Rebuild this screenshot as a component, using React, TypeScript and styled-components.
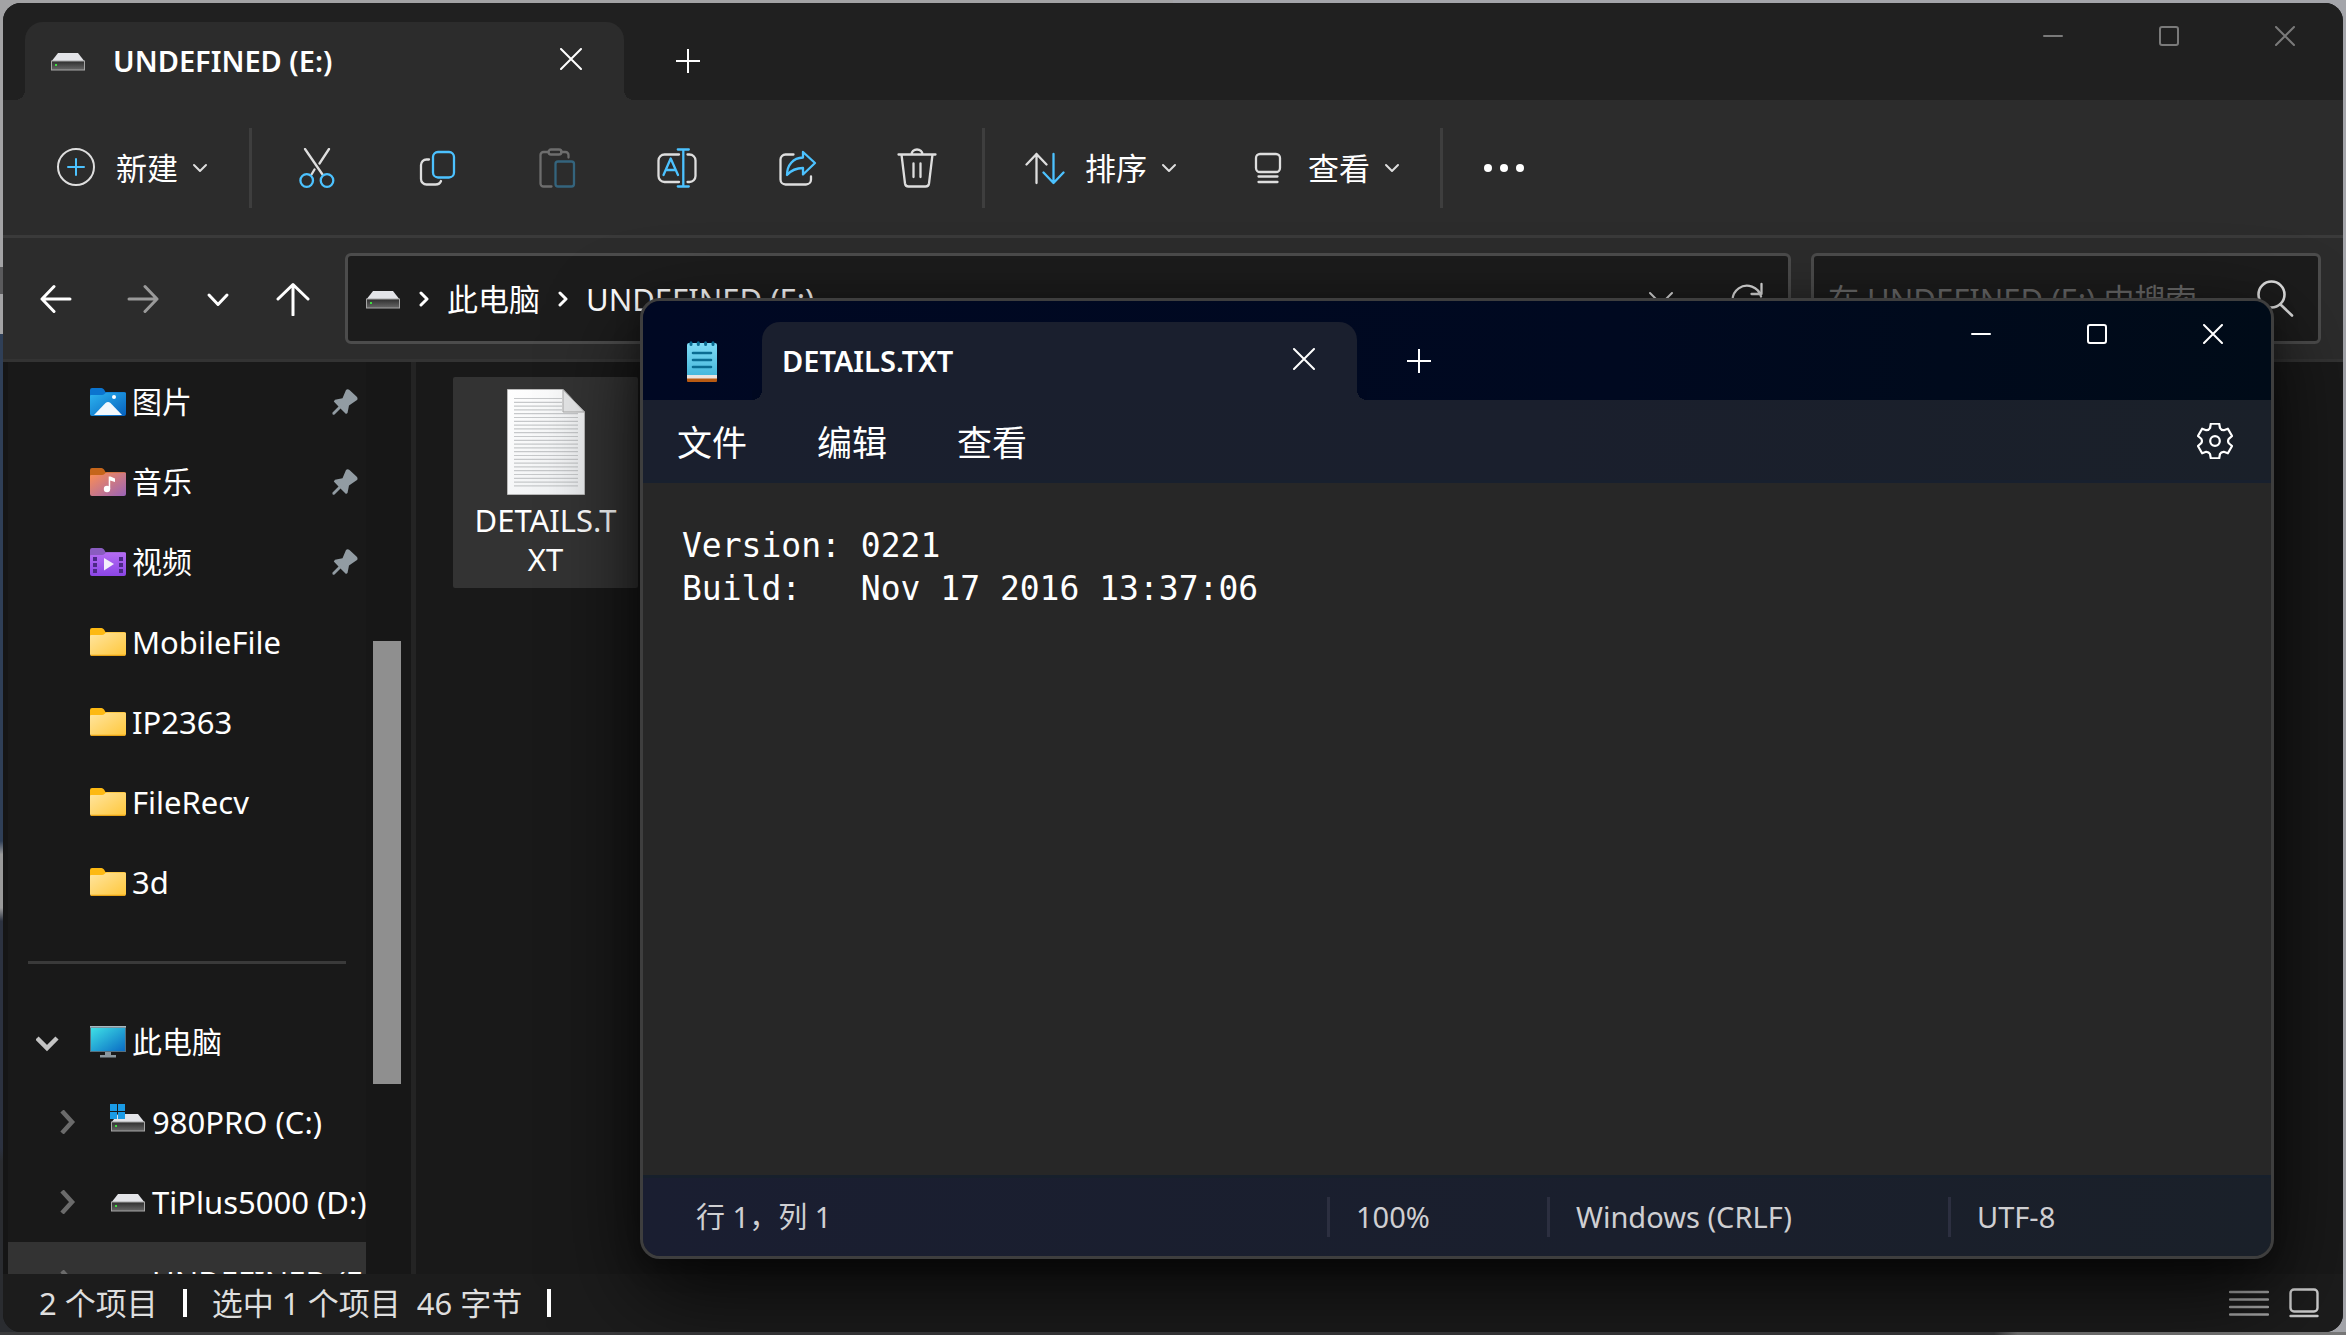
import React, { useState } from "react";
import styled, { createGlobalStyle } from "styled-components";

const ui = `"Noto Sans", "Noto Sans CJK SC", sans-serif`;
const blue = "#4cc2ff";

const GlobalStyle = createGlobalStyle`
  * { box-sizing: border-box; }
  body { margin: 0; background: #202020; }
  button, input, textarea { font: inherit; color: inherit; margin: 0; }
  svg { display: block; flex: none; }
`;

/* ---------- frame ---------- */

const Desktop = styled.div`
  position: relative;
  display: flex;
  height: 100vh;
  padding: 3px;
  overflow: hidden;
  font-family: ${ui};
  font-size: 31px;
  line-height: 40px;
  color: #fff;
  background:
    linear-gradient(90deg, #3a3a3c 0 85%, #787878 86%) bottom / 100% 3px no-repeat,
    linear-gradient(180deg, #a3a3a5 0 20%, #5a5a5c 20% 22%, #a3a3a5 22% 25%, #2f3f57 25% 63%, #9a9a9a 64% 68%, #2c3240 69% 86%, #2a2c30 87%) left / 50% 100% no-repeat,
    #a4a5aa;
`;

const Explorer = styled.section`
  display: flex;
  flex: 1;
  flex-direction: column;
  min-width: 0;
  border-radius: 18px;
  overflow: hidden;
  background: #191919;
`;

const PlainButton = styled.button`
  display: flex;
  align-items: center;
  justify-content: center;
  flex: none;
  padding: 0;
  border: 0;
  background: none;
  white-space: nowrap;
`;

const Tab = styled.div<{ $bg: string; $edge: string; $width: number }>`
  position: relative;
  display: flex;
  align-items: center;
  flex: none;
  width: ${(p) => p.$width}px;
  border-radius: 18px 18px 0 0;
  background: ${(p) => p.$bg};
  font-weight: 600;
  font-size: 29px;
  &::before,
  &::after {
    content: "";
    position: absolute;
    bottom: 0;
    width: 10px;
    height: 10px;
  }
  &::before {
    right: 100%;
    background: radial-gradient(circle at 0 0, ${(p) => p.$edge} 10px, ${(p) => p.$bg} 10px);
  }
  &::after {
    left: 100%;
    background: radial-gradient(circle at 100% 0, ${(p) => p.$edge} 10px, ${(p) => p.$bg} 10px);
  }
`;

const ExplorerTab = styled(Tab)`
  padding: 0 42px 0 25px;
  gap: 27px;
`;

const NoteTab = styled(Tab)`
  padding: 0 42px 0 20px;
`;

const TabName = styled.span`
  flex: 1;
  white-space: nowrap;
`;

const TabClose = styled(PlainButton)`
  height: 40px;
  padding-bottom: 4px;
`;

const TitleBar = styled.header`
  display: flex;
  flex: none;
  height: 97px;
  background: #202020;
`;

const NoteTitle = styled(TitleBar)`
  height: 99px;
  background: linear-gradient(90deg, #000823, #000920 60%, #000b18);
`;

const TabBar = styled.div`
  display: flex;
  flex: 1;
  padding: 19px 0 0 22px;
  gap: 44px;
`;

const NoteTabBar = styled(TabBar)`
  padding: 21px 0 0 44px;
  gap: 42px;
`;

const NewTab = styled(PlainButton)`
  width: 40px;
`;

const CaptionButtons = styled.div<{ $color: string }>`
  display: flex;
  height: 66px;
  color: ${(p) => p.$color};
`;

const CaptionButton = styled(PlainButton)`
  width: 116px;
  height: 66px;
`;

/* ---------- explorer toolbar ---------- */

const Toolbar = styled.div`
  display: flex;
  align-items: center;
  flex: none;
  height: 138px;
  padding: 0 12px;
  border-bottom: 3px solid #3a3a3a;
  background: #2c2c2c;
`;

const TextTool = styled(PlainButton)`
  gap: 20px;
`;

const ToolLabel = styled.span`
  display: flex;
  align-items: center;
  gap: 14px;
`;

const IconTool = styled(PlainButton)`
  width: 120px;
  height: 80px;
`;

const Rule = styled.span`
  flex: none;
  width: 3px;
  height: 80px;
  background: #3e3e3e;
`;

const Group = styled.div<{ $gap?: number; $pad: number }>`
  display: flex;
  gap: ${(p) => p.$gap ?? 0}px;
  padding: 0 ${(p) => p.$pad}px;
`;

const AddressRow = styled.div`
  display: flex;
  align-items: center;
  flex: none;
  gap: 20px;
  height: 124px;
  padding: 0 22px 0 32px;
  border-bottom: 3px solid #333;
  background: #2c2c2c;
`;

const NavButtons = styled.nav`
  display: flex;
  align-items: center;
  width: 290px;
`;

const NavButton = styled(PlainButton)<{ $width: number; $dim?: boolean }>`
  width: ${(p) => p.$width}px;
  height: 60px;
  color: ${(p) => (p.$dim ? "#9a9a9a" : "#fff")};
`;

const Field = styled.div`
  display: flex;
  align-items: center;
  min-width: 0;
  height: 91px;
  border: 3px solid #4c4c4c;
  border-radius: 6px;
  background: #1c1c1c;
`;

const Address = styled(Field)`
  flex: 1;
  gap: 18px;
  padding: 0 24px 0 17px;
`;

const Grow = styled.span`
  flex: 1;
`;

const EndButtons = styled.div`
  display: flex;
  gap: 56px;
`;

const Search = styled(Field)`
  flex: 0 0 510px;
  padding: 0 24px 0 14px;
`;

const SearchInput = styled.input`
  flex: 1;
  min-width: 0;
  padding: 0;
  border: 0;
  outline: 0;
  background: none;
  &::placeholder {
    color: #6a6a6a;
    opacity: 1;
  }
`;

/* ---------- explorer body ---------- */

const Body = styled.div`
  display: flex;
  flex: 1;
  min-height: 0;
`;

const Sidebar = styled.aside`
  display: flex;
  flex: none;
  width: 413px;
  border-left: 5px solid #151515;
  border-right: 5px solid #242424;
  overflow: hidden;
`;

const Tree = styled.ul`
  width: 358px;
  margin: 0;
  padding: 0;
  list-style: none;
`;

const TreeRow = styled.li<{ $deep?: boolean; $selected?: boolean }>`
  display: flex;
  align-items: center;
  height: 80px;
  overflow: hidden;
  padding-left: ${(p) => (p.$deep ? 48 : 28)}px;
  background: ${(p) => (p.$selected ? "#333" : "none")};
`;

const Twisty = styled(PlainButton)`
  width: 24px;
  height: 40px;
  margin-right: 30px;
`;

const TreeLink = styled.a<{ $cjk?: boolean }>`
  display: flex;
  align-items: center;
  flex: 1;
  gap: 6px;
  color: inherit;
  font-size: ${(p) => (p.$cjk ? 30 : 31)}px;
  text-decoration: none;
  white-space: nowrap;
`;

const PinSlot = styled.span`
  flex: none;
  width: 34px;
`;

const TreeDivider = styled.li`
  display: flex;
  align-items: center;
  height: 80px;
  padding: 0 20px;
  &::after {
    content: "";
    flex: 1;
    height: 3px;
    background: #3a3a3a;
  }
`;

const ScrollTrack = styled.div`
  display: flex;
  flex: 1;
  flex-direction: column;
  padding: 0 10px 0 7px;
  background: #171717;
`;

const ScrollPart = styled.div<{ $share: number; $thumb?: boolean }>`
  flex: ${(p) => p.$share};
  background: ${(p) => (p.$thumb ? "#8f8f8f" : "none")};
`;

const Files = styled.main`
  flex: 1;
  padding: 15px 37px;
`;

const FileTile = styled(PlainButton)`
  flex-direction: column;
  justify-content: flex-start;
  width: 185px;
  height: 211px;
  padding: 12px 18px 0;
  gap: 6px;
  border-radius: 2px;
  background: #333;
`;

const FileName = styled.span`
  line-height: 39px;
  white-space: normal;
  word-break: break-all;
`;

const StatusBar = styled.footer`
  display: flex;
  align-items: center;
  flex: none;
  height: 58px;
  padding: 0 24px 0 36px;
  background: #1c1c1c;
  color: #dedede;
`;

const StatusRule = styled.span`
  width: 4px;
  height: 28px;
  margin: 0 25px;
  background: #fff;
`;

const StatusText = styled.span`
  margin-right: 16px;
  white-space: nowrap;
`;

const ViewButtons = styled.div`
  display: flex;
  gap: 20px;
  margin-left: auto;
`;

/* ---------- notepad ---------- */

const Notepad = styled.section`
  position: absolute;
  top: 298px;
  right: 72px;
  bottom: 76px;
  left: 640px;
  display: flex;
  flex-direction: column;
  border: 3px solid #3e3e3e;
  border-radius: 20px;
  overflow: hidden;
  background: #272727;
  box-shadow: 0 32px 90px rgba(0, 0, 0, 0.75), 0 8px 24px rgba(0, 0, 0, 0.3);
`;

const AppIcon = styled.span`
  display: flex;
  align-items: center;
  width: 33px;
`;

const MenuBar = styled.div`
  display: flex;
  align-items: center;
  flex: none;
  height: 83px;
  padding: 2px 38px 0 34px;
  gap: 70px;
  border-bottom: 3px solid #18202e;
  background: linear-gradient(90deg, #1a1f2e, #1a1f2d 55%, #1a2029);
`;

const MenuItem = styled(PlainButton)`
  padding-top: 4px;
  font-size: 35px;
  line-height: 50px;
`;

const Editor = styled.textarea`
  flex: 1;
  min-height: 0;
  padding: 41px 39px;
  border: 0;
  outline: 0;
  resize: none;
  background: #272727;
  font-family: "DejaVu Sans Mono", monospace;
  font-size: 33px;
  line-height: 43px;
`;

const NoteStatus = styled.footer`
  display: grid;
  grid-template-columns: 1fr 220px 401px 323px;
  align-items: center;
  flex: none;
  height: 81px;
  padding-left: 53px;
  border-top: 3px solid #17202c;
  background: linear-gradient(90deg, #1a1e31, #1a1f2d 60%, #1a2029);
  color: #cfcfd2;
  font-size: 29px;
`;

const NoteCell = styled.span<{ $ruled?: boolean }>`
  height: 40px;
  padding-left: ${(p) => (p.$ruled ? 26 : 0)}px;
  border-left: ${(p) => (p.$ruled ? "3px solid #2c2f40" : "0")};
  white-space: nowrap;
`;

/* ---------- icons ---------- */

type StrokeProps = { w: number; h?: number; sw?: number; color?: string; children: React.ReactNode };

const Stroke = ({ w, h = w, sw = 2, color = "currentColor", children }: StrokeProps) => (
  <svg width={w} height={h} viewBox={`0 0 ${w} ${h}`} fill="none" stroke={color} strokeWidth={sw} strokeLinecap="round" strokeLinejoin="round" aria-hidden="true">
    {children}
  </svg>
);

const light = "#dedede";

const CloseGlyph = ({ size = 20 }: { size?: number }) => (
  <Stroke w={size}><path d={`M1 1L${size - 1} ${size - 1}M${size - 1} 1L1 ${size - 1}`} /></Stroke>
);
const PlusGlyph = () => <Stroke w={24}><path d="M12 0V24M0 12H24" /></Stroke>;
const MinGlyph = () => <Stroke w={20}><path d="M1 10H19" /></Stroke>;
const MaxGlyph = () => <Stroke w={20}><rect x="1" y="1" width="18" height="18" rx="2" /></Stroke>;
const ChevronSmall = () => <Stroke w={16} color={light}><path d="M2 5L8 11L14 5" /></Stroke>;

const NewIcon = () => (
  <Stroke w={40} color={light}>
    <circle cx="20" cy="19" r="18" /><path d="M20 11V27M12 19H28" stroke={blue} />
  </Stroke>
);
const CutIcon = () => (
  <Stroke w={40} sw={2.3} color={light}>
    <path d="M8 1L25.500 26.500M32 1L22.500 15.500M17.500 21.500L14.500 26.500" />
    <circle cx="9.700" cy="32.500" r="6.300" stroke={blue} /><circle cx="30" cy="32.500" r="6.300" stroke={blue} />
  </Stroke>
);
const CopyIcon = () => (
  <Stroke w={40} sw={2.3} color={light}>
    <path d="M12 11.500H9.500A5.500 5.500 0 0 0 4 17V31A5.500 5.500 0 0 0 9.500 36.500H18.500C21.500 36.500 23.200 35.300 24 33" />
    <rect x="16" y="4" width="21" height="25.500" rx="5" stroke={blue} />
  </Stroke>
);
const PasteIcon = () => (
  <Stroke w={40} sw={2.3} color="#6d6d6d">
    <path d="M11.500 4H6.500A3 3 0 0 0 3.500 7V35.500A3 3 0 0 0 6.500 38.500H14.500M24 4H28.500A3 3 0 0 1 31.500 7V9.500" />
    <rect x="11.500" y="1.500" width="13" height="5" rx="2.500" />
    <rect x="18.500" y="13.500" width="18.500" height="25" rx="2.500" stroke="#34647d" />
  </Stroke>
);
const RenameIcon = () => (
  <Stroke w={40} sw={2.3} color={light}>
    <path d="M22 6.500H7.500A6 6 0 0 0 1.500 12.500V28A6 6 0 0 0 7.500 34H22M30.500 6.500H32.500A6 6 0 0 1 38.500 12.500V28A6 6 0 0 1 32.500 34H30.500" />
    <path d="M26.300 1.500V38.500M20.800 1.500H31.800M20.800 38.500H31.800M6.500 27L13.700 10.500L21 27M8.800 22H18.800" stroke={blue} />
  </Stroke>
);
const ShareIcon = () => (
  <Stroke w={40} sw={2.3} color={light}>
    <path d="M16.500 6.500H8.500A5 5 0 0 0 3.500 11.500V31.500A5 5 0 0 0 8.500 36.500H29A5 5 0 0 0 34 31.500V28.500" />
    <path d="M26 4L38 15L26 26.500V20C19 20 14 22.500 10 27C10 17 16 10 26 9.500Z" stroke={blue} />
  </Stroke>
);
const TrashIcon = () => (
  <Stroke w={40} sw={2.3} color={light}>
    <path d="M1.500 6.500H38.500M14.500 6.500A5.500 5 0 0 1 25.500 6.500M4.500 6.500L8 35.500A3.500 3.500 0 0 0 11.500 38.500H28.500A3.500 3.500 0 0 0 32 35.500L35.500 6.500M16.500 15.500V29M23.500 15.500V29" />
  </Stroke>
);
const SortIcon = () => (
  <Stroke w={40} sw={2.3} color={light}>
    <path d="M11.500 35V6M1.500 16.500L11.500 6L21.500 16.500" />
    <path d="M28.500 6V35M18.500 24.500L28.500 35L38.500 24.500" stroke={blue} />
  </Stroke>
);
const ViewIcon = () => (
  <Stroke w={40} sw={2.3} color={light}>
    <rect x="8" y="6" width="24" height="18" rx="4" /><path d="M10.500 28.500H29.500M10.500 34H29.500" />
  </Stroke>
);
const DotsIcon = () => (
  <svg width="42" height="12" viewBox="0 0 42 12" fill="#fff" aria-hidden="true">
    <circle cx="5" cy="6" r="4" /><circle cx="21" cy="6" r="4" /><circle cx="37" cy="6" r="4" />
  </svg>
);

const BackIcon = () => <Stroke w={32} sw={3}><path d="M30 16H2M14 3.500L2 16L14 28.500" /></Stroke>;
const ForwardIcon = () => <Stroke w={32} sw={3}><path d="M2 16H30M18 3.500L30 16L18 28.500" /></Stroke>;
const RecentIcon = () => <Stroke w={24} sw={3}><path d="M3 8L12 17.500L21 8" /></Stroke>;
const UpIcon = () => <Stroke w={34} sw={3}><path d="M17 33V3M2 17L17 2.500L32 17" /></Stroke>;
const CrumbArrow = () => <Stroke w={10} h={16} sw={3}><path d="M2 2L8 8L2 14" /></Stroke>;
const DropIcon = () => <Stroke w={26} color={light}><path d="M2 7L13 18L24 7" /></Stroke>;
const RefreshIcon = () => (
  <Stroke w={34} sw={2.3} color={light}><path d="M31 14.500A14.500 14.500 0 1 0 31 22M31.500 2V12H21.500" /></Stroke>
);
const SearchIcon = () => (
  <Stroke w={38} sw={2.6} color={light}><circle cx="15.500" cy="14.500" r="13" /><path d="M24.500 24.500L36 35.500" /></Stroke>
);

/* One tooth and one valley of the gear, turned six times round the centre. */
const tooth: [string, number, number][] = [
  ["L", -4.2, -17.3], ["L", 4.2, -17.3], ["L", 5, -13], ["Q", 6.2, -10.7], ["", 8.8, -10.8],
];
const GearIcon = () => {
  let d = "";
  for (let k = 0; k < 6; k++) {
    const a = (k * Math.PI) / 3;
    for (const [cmd, x, y] of tooth) {
      const px = 18 + x * Math.cos(a) - y * Math.sin(a);
      const py = 18 + x * Math.sin(a) + y * Math.cos(a);
      d += `${d ? cmd : "M"}${px.toFixed(2)} ${py.toFixed(2)} `;
    }
  }
  return <Stroke w={36} sw={2.2}><path d={d + "Z"} /><circle cx="18" cy="18" r="4.800" /></Stroke>;
};

const Drive = ({ windows }: { windows?: boolean }) => (
  <svg width={36} height={windows ? 36 : 20} viewBox={windows ? "-1 -10 36 36" : "-1 -2 36 20"} aria-hidden="true">
    <path d="M7 0H27L34 9V10H0V9Z" fill="#e3e4e8" />
    <rect x="0.500" y="8" width="33" height="9" fill="url(#driveBody)" stroke="#a5a5a5" />
    <rect x="4" y="11" width="2" height="2" fill="#3fe03f" />
    {windows && (
      <g fill="#1a9be6">
        <rect x="-1" y="-10" width="7" height="7" /><rect x="7" y="-10" width="7" height="7" />
        <rect x="-1" y="-2" width="7" height="7" /><rect x="7" y="-2" width="7" height="7" />
      </g>
    )}
  </svg>
);

const HiddenSvg = styled.svg`
  position: absolute;
`;

const Defs = () => (
  <HiddenSvg width="0" height="0" aria-hidden="true">
    <defs>
      <linearGradient id="driveBody" x1="0" y1="0" x2="0" y2="1"><stop offset="0" stopColor="#2e2e2e" /><stop offset="1" stopColor="#686868" /></linearGradient>
      <linearGradient id="picFront" x1="0" y1="0" x2="1" y2="1"><stop offset="0" stopColor="#2db4f0" /><stop offset="1" stopColor="#0560bd" /></linearGradient>
      <linearGradient id="musicFront" x1="0" y1="0" x2="1" y2="1"><stop offset="0" stopColor="#ff8f50" /><stop offset="1" stopColor="#9a63b8" /></linearGradient>
      <linearGradient id="videoFront" x1="0" y1="0" x2="0" y2="1"><stop offset="0" stopColor="#b56cf3" /><stop offset="1" stopColor="#8b45e6" /></linearGradient>
      <linearGradient id="folderFront" x1="0" y1="0" x2="1" y2="1"><stop offset="0" stopColor="#ffe5a0" /><stop offset="1" stopColor="#ffc73a" /></linearGradient>
      <linearGradient id="screen" x1="0" y1="0" x2="1" y2="1"><stop offset="0" stopColor="#3ee0e6" /><stop offset="1" stopColor="#0a6cc4" /></linearGradient>
      <linearGradient id="paper" x1="0" y1="0" x2="1" y2="1"><stop offset="0" stopColor="#fff" /><stop offset="1" stopColor="#eceef0" /></linearGradient>
      <linearGradient id="note" x1="0" y1="0" x2="0" y2="1"><stop offset="0" stopColor="#7fdcf6" /><stop offset="1" stopColor="#47b8dc" /></linearGradient>
    </defs>
  </HiddenSvg>
);

type Kind = "pic" | "music" | "video" | "folder";
const backs: Record<Kind, string> = { pic: "#0b74cf", music: "#c5651a", video: "#8a5cc0", folder: "#fdb913" };

const FolderIcon = ({ kind }: { kind: Kind }) => (
  <svg width="36" height="28" viewBox="0 0 36 28" aria-hidden="true">
    <path d="M0 2Q0 0 2 0H11.500Q13 0 14 1.500L15.500 4H34Q36 4 36 6V10H0Z" fill={backs[kind]} />
    <path d="M0 8Q0 7 1 7H12Q13.500 7 14.500 6L15.500 5Q16 4.500 17 4.500H35Q36 4.500 36 5.500V26Q36 28 34 28H2Q0 28 0 26Z" fill={`url(#${kind}Front)`} />
    {kind === "folder" && <path d="M1 27.300H35" stroke="#e8a317" strokeWidth="1.200" />}
    {kind === "pic" && (<><path d="M4 27L15.500 15Q18 12.800 20.500 15L32 27Z" fill="#f2f8fd" /><circle cx="24" cy="9" r="2" fill="#fff" /></>)}
    {kind === "music" && (<g fill="#fff"><circle cx="17" cy="21" r="3.200" /><path d="M18.700 8.500H20.500L25 10.500V14L20.200 12.500V21H18.700Z" /></g>)}
    {kind === "video" && (
      <>
        <g fill="#4b2885">
          {[9, 15, 21].map((y) => (<React.Fragment key={y}><rect x="3" y={y} width="4" height="4" /><rect x="29" y={y} width="4" height="4" /></React.Fragment>))}
        </g>
        <path d="M14 10L24 16L14 22.500Z" fill="#f4eefb" />
      </>
    )}
  </svg>
);
const MonitorIcon = () => (
  <svg width="36" height="32" viewBox="0 0 36 32" aria-hidden="true">
    <rect width="36" height="26" fill="#56707e" /><rect y="0" width="36" height="1.500" fill="#a8bac2" />
    <rect x="1" y="2" width="34" height="23" fill="url(#screen)" />
    <path d="M15 26H21V29H15Z" fill="#8b979e" /><path d="M10 29H26V31.500H10Z" fill="#8b979e" />
  </svg>
);
const PinIcon = () => (
  <svg width="26" height="26" viewBox="0 0 26 26" aria-hidden="true">
    <path d="M14 1Q15.500 -0.300 17.500 1L24.500 7.500Q26.300 9.500 25 11L17 16.500L15.500 24L14 25L8.500 19.500L2.500 25.500Q0 26.500 0.500 23.500L6.500 17.500L1.800 12.500L3 10.800L10.500 9.300Z" fill="#929ca3" />
  </svg>
);
const TwistyIcon = ({ open }: { open?: boolean }) => (
  <Stroke w={24} sw={4.5} color={open ? "#c4c4c4" : "#6b6b6b"}>
    <path d={open ? "M1 8L11 18L21 8" : "M6 1L16 12L6 23"} strokeLinecap="butt" strokeLinejoin="miter" />
  </Stroke>
);
const DocIcon = () => (
  <svg width="78" height="106" viewBox="0 0 78 106" aria-hidden="true">
    <path d="M0.500 0.500H56L77.500 23V105.500H0.500Z" fill="url(#paper)" stroke="#b9b9b9" />
    <g stroke="#c6c8ca" strokeWidth="1.200">
      {Array.from({ length: 24 }, (_, i) => (<path key={i} d={`M7 ${9.5 + i * 3.8}H${i < 4 ? 55 : 71}`} />))}
    </g>
    <path d="M56 0.500L77.500 23H56Z" fill="#e6e7e8" stroke="#a9a9a9" />
  </svg>
);
const NotepadIcon = () => (
  <svg width="30" height="41" viewBox="0 0 30 41" aria-hidden="true">
    <rect y="36" width="30" height="5" rx="1" fill="#b85a12" /><rect y="33" width="30" height="4.500" fill="#e9e4e0" />
    <path d="M0 4Q0 2 2 2H28Q30 2 30 4V34H0Z" fill="url(#note)" />
    <g stroke="#0a6c92" strokeWidth="3" strokeLinecap="round"><path d="M4 1.800V3.500M11.300 1.800V3.500M18.600 1.800V3.500M26 1.800V3.500" /><path d="M6 12H24M6 19H24M6 26H24" strokeWidth="2.600" /></g>
  </svg>
);
const ListIcon = () => <Stroke w={40} h={28} sw={2.4} color="#a8a8a8"><path d="M1 3H39M1 10.500H39M1 18H39M1 25.500H39" /></Stroke>;
const ThumbIcon = () => <Stroke w={30} h={30} sw={2.4} color="#cfcfcf"><rect x="1.500" y="1.500" width="27" height="22" rx="3.500" /><path d="M1.500 28H28.500" /></Stroke>;

/* ---------- parts ---------- */

const Caption = ({ color, name }: { color: string; name: string }) => (
  <CaptionButtons $color={color}>
    <CaptionButton aria-label={`${name} 最小化`}><MinGlyph /></CaptionButton>
    <CaptionButton aria-label={`${name} 最大化`}><MaxGlyph /></CaptionButton>
    <CaptionButton aria-label={`${name} 关闭`}><CloseGlyph /></CaptionButton>
  </CaptionButtons>
);

const tools: [string, () => React.ReactElement][] = [
  ["剪切", CutIcon], ["复制", CopyIcon], ["粘贴", PasteIcon], ["重命名", RenameIcon], ["共享", ShareIcon], ["删除", TrashIcon],
];
const folders: { name: string; kind: Kind; pinned?: boolean }[] = [
  { name: "图片", kind: "pic", pinned: true }, { name: "音乐", kind: "music", pinned: true }, { name: "视频", kind: "video", pinned: true },
  { name: "MobileFile", kind: "folder" }, { name: "IP2363", kind: "folder" }, { name: "FileRecv", kind: "folder" }, { name: "3d", kind: "folder" },
];
const drives: { name: string; windows?: boolean; selected?: boolean }[] = [
  { name: "980PRO (C:)", windows: true }, { name: "TiPlus5000 (D:)" }, { name: "UNDEFINED (E:)", selected: true },
];

export default function App() {
  const [query, setQuery] = useState("");
  const [text, setText] = useState("Version: 0221\nBuild:   Nov 17 2016 13:37:06");
  return (
    <>
      <GlobalStyle />
      <Defs />
      <Desktop>
        <Explorer>
          <TitleBar>
            <TabBar>
              <ExplorerTab $bg="#2c2c2c" $edge="#202020" $width={599}>
                <Drive />
                <TabName>UNDEFINED (E:)</TabName>
                <TabClose aria-label="关闭标签页"><CloseGlyph size={22} /></TabClose>
              </ExplorerTab>
              <NewTab aria-label="新标签页"><PlusGlyph /></NewTab>
            </TabBar>
            <Caption color="#7a7a7a" name="资源管理器" />
          </TitleBar>
          <Toolbar>
            <Group $pad={41}>
              <TextTool><NewIcon /><ToolLabel>新建 <ChevronSmall /></ToolLabel></TextTool>
            </Group>
            <Rule />
            <Group $pad={5}>
              {tools.map(([label, Icon]) => <IconTool key={label} aria-label={label}><Icon /></IconTool>)}
            </Group>
            <Rule />
            <Group $pad={40} $gap={71}>
              <TextTool><SortIcon /><ToolLabel>排序 <ChevronSmall /></ToolLabel></TextTool>
              <TextTool><ViewIcon /><ToolLabel>查看 <ChevronSmall /></ToolLabel></TextTool>
            </Group>
            <Rule />
            <Group $pad={40}><PlainButton aria-label="更多"><DotsIcon /></PlainButton></Group>
          </Toolbar>
          <AddressRow>
            <NavButtons>
              <NavButton $width={42} aria-label="后退"><BackIcon /></NavButton>
              <NavButton $width={132} $dim aria-label="前进"><ForwardIcon /></NavButton>
              <NavButton $width={18} aria-label="最近"><RecentIcon /></NavButton>
              <NavButton $width={132} aria-label="向上"><UpIcon /></NavButton>
            </NavButtons>
            <Address>
              <Drive />
              <CrumbArrow />
              <PlainButton>此电脑</PlainButton>
              <CrumbArrow />
              <PlainButton>UNDEFINED (E:)</PlainButton>
              <Grow />
              <EndButtons>
                <PlainButton aria-label="历史记录"><DropIcon /></PlainButton>
                <PlainButton aria-label="刷新"><RefreshIcon /></PlainButton>
              </EndButtons>
            </Address>
            <Search>
              <SearchInput aria-label="搜索" placeholder="在 UNDEFINED (E:) 中搜索" value={query} onChange={(e) => setQuery(e.target.value)} />
              <PlainButton aria-label="开始搜索"><SearchIcon /></PlainButton>
            </Search>
          </AddressRow>
          <Body>
            <Sidebar>
              <Tree>
                {folders.map((f) => (
                  <TreeRow key={f.name}>
                    <Twisty as="span" />
                    <TreeLink href="#" $cjk={f.pinned}><FolderIcon kind={f.kind} />{f.name}</TreeLink>
                    {f.pinned && <PinSlot><PinIcon /></PinSlot>}
                  </TreeRow>
                ))}
                <TreeDivider />
                <TreeRow>
                  <Twisty aria-label="折叠"><TwistyIcon open /></Twisty>
                  <TreeLink href="#" $cjk><MonitorIcon />此电脑</TreeLink>
                </TreeRow>
                {drives.map((d) => (
                  <TreeRow key={d.name} $deep $selected={d.selected}>
                    <Twisty aria-label={`展开 ${d.name}`}><TwistyIcon /></Twisty>
                    <TreeLink href="#"><Drive windows={d.windows} />{d.name}</TreeLink>
                  </TreeRow>
                ))}
              </Tree>
              <ScrollTrack>
                <ScrollPart $share={279} />
                <ScrollPart $share={443} $thumb />
                <ScrollPart $share={190} />
              </ScrollTrack>
            </Sidebar>
            <Files>
              <FileTile><DocIcon /><FileName>DETAILS.TXT</FileName></FileTile>
            </Files>
          </Body>
          <StatusBar>
            <span>2 个项目</span>
            <StatusRule />
            <StatusText>选中 1 个项目</StatusText>
            <span>46 字节</span>
            <StatusRule />
            <ViewButtons>
              <PlainButton aria-label="详细信息"><ListIcon /></PlainButton>
              <PlainButton aria-label="大图标"><ThumbIcon /></PlainButton>
            </ViewButtons>
          </StatusBar>
        </Explorer>

        <Notepad>
          <NoteTitle>
            <NoteTabBar>
              <AppIcon><NotepadIcon /></AppIcon>
              <NoteTab $bg="#1a1f2e" $edge="#000820" $width={595}>
                <TabName>DETAILS.TXT</TabName>
                <TabClose aria-label="关闭标签页"><CloseGlyph size={22} /></TabClose>
              </NoteTab>
              <NewTab aria-label="新标签页"><PlusGlyph /></NewTab>
            </NoteTabBar>
            <Caption color="#ffffff" name="记事本" />
          </NoteTitle>
          <MenuBar>
            <MenuItem>文件</MenuItem>
            <MenuItem>编辑</MenuItem>
            <MenuItem>查看</MenuItem>
            <Grow />
            <PlainButton aria-label="设置"><GearIcon /></PlainButton>
          </MenuBar>
          <Editor aria-label="文本编辑器" spellCheck={false} value={text} onChange={(e) => setText(e.target.value)} />
          <NoteStatus>
            <NoteCell>行 1，列 1</NoteCell>
            <NoteCell $ruled>100%</NoteCell>
            <NoteCell $ruled>Windows (CRLF)</NoteCell>
            <NoteCell $ruled>UTF-8</NoteCell>
          </NoteStatus>
        </Notepad>
      </Desktop>
    </>
  );
}
